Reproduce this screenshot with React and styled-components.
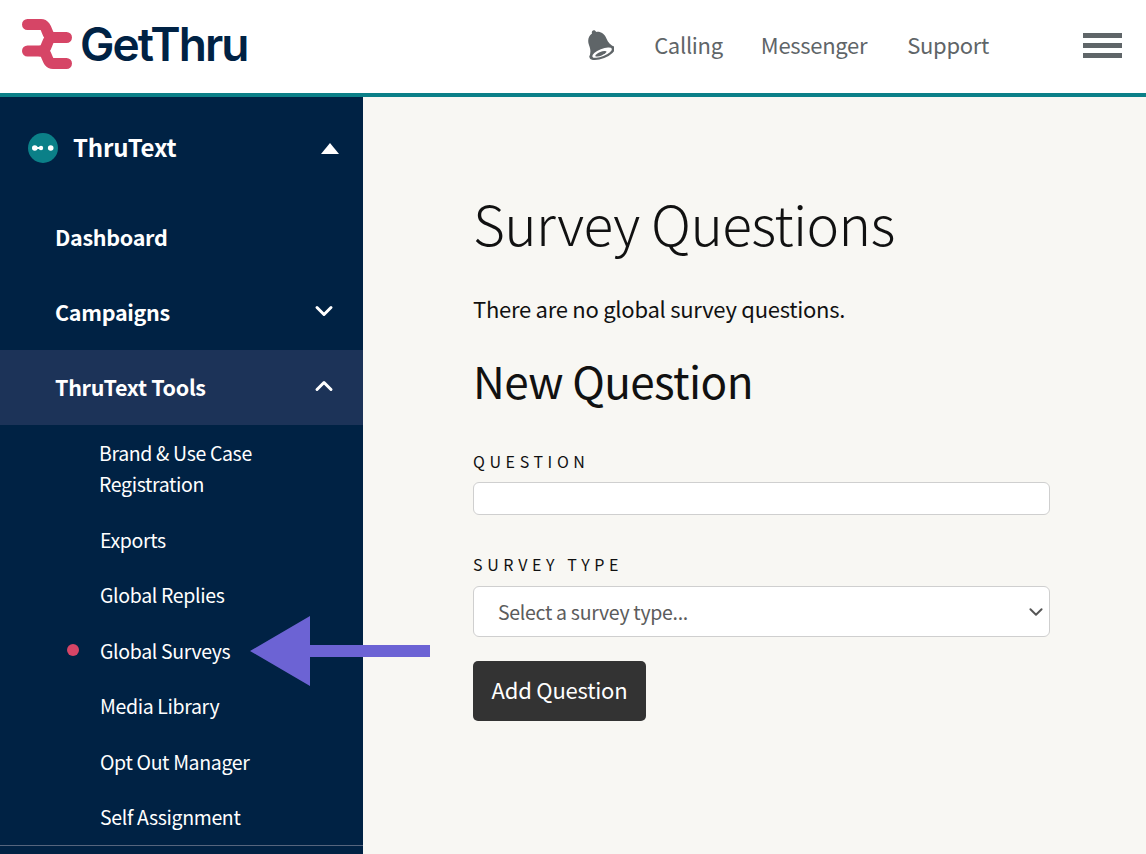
import React from "react";
import styled, { createGlobalStyle } from "styled-components";

const Global = createGlobalStyle`
  html, body { margin: 0; height: 100%; overflow: hidden; }
  body {
    background: #f8f7f3;
    font-family: "Noto Sans CJK JP", "Noto Sans", sans-serif;
    color: #111;
  }
`;

const Page = styled.div`
  position: relative;
  display: flex;
  flex-direction: column;
  width: 1146px;
  height: 854px;
  overflow: hidden;
`;

const Header = styled.header`
  display: flex;
  align-items: center;
  flex: 0 0 auto;
  height: 97px;
  padding: 0 24px 5px 22px;
  box-sizing: border-box;
  background: #fff;
  border-bottom: 4px solid #0b8088;
`;

const Brand = styled.div`
  display: flex;
  align-items: center;
  gap: 8px;
`;

const BrandName = styled.span`
  font-family: Inter, sans-serif;
  font-size: 46px;
  font-weight: 600;
  letter-spacing: -2px;
  color: #002244;
`;

const TopNav = styled.nav`
  display: flex;
  align-items: center;
  margin-left: auto;
`;

const NavLink = styled.a`
  font-size: 22px;
  letter-spacing: -0.3px;
  line-height: 30px;
  color: #5f6568;
  margin-left: ${(p) => p.$gap}px;
`;

const Burger = styled.div`
  display: flex;
  flex-direction: column;
  gap: 5px;
  width: 39px;
  margin: 3px 0 0 94px;
  span {
    display: block;
    height: 5px;
    background: #5f6568;
  }
`;

const Body = styled.div`
  display: flex;
  flex: 1;
  min-height: 0;
`;

const Sidebar = styled.aside`
  flex: 0 0 363px;
  background: #002244;
  color: #fff;
  padding-top: 14px;
  box-sizing: border-box;
`;

const ProductRow = styled.div`
  display: flex;
  align-items: center;
  height: 74px;
  margin-bottom: 15px;
  padding: 0 24px 0 28px;
  font-size: 24px;
  font-weight: 600;
  letter-spacing: -0.2px;
  gap: 15px;
`;

const ProductName = styled.span`
  margin-bottom: 4px;
`;

const ProductBadge = styled.span`
  display: flex;
  align-items: center;
  justify-content: center;
  width: 30px;
  height: 30px;
  border-radius: 50%;
  background: #0b8088;
`;

const Caret = styled.span`
  margin-left: auto;
  width: 0;
  height: 0;
  border-left: 9px solid transparent;
  border-right: 9px solid transparent;
  border-bottom: 11px solid #fff;
`;

const MainItem = styled.div`
  display: flex;
  align-items: center;
  justify-content: space-between;
  height: 75px;
  padding: 0 29px 3px 55px;
  box-sizing: border-box;
  font-size: 21.500px;
  letter-spacing: -0.3px;
  font-weight: 600;
  background: ${(p) => (p.$open ? "#1c3358" : "transparent")};
`;

const SubList = styled.ul`
  list-style: none;
  margin: 0;
  padding: 0 0 0.500px 100px;
`;

const SubItem = styled.li`
  position: relative;
  display: flex;
  align-items: center;
  height: ${(p) => (p.$tall ? 86.500 : 55.500)}px;
  font-size: 19.500px;
  letter-spacing: -0.35px;
  line-height: 31px;
  margin-left: ${(p) => (p.$tall ? -1 : 0)}px;
`;

const ActiveDot = styled.span`
  position: absolute;
  left: -33px;
  top: 21px;
  width: 12px;
  height: 12px;
  border-radius: 50%;
  background: #d64566;
`;

const SideDivider = styled.hr`
  margin: 0;
  border: 0;
  border-top: 1px solid #56657d;
`;

const Main = styled.main`
  flex: 1;
  padding: 87px 96px 0 110px;
  box-sizing: border-box;
`;

const Title = styled.h1`
  margin: 0;
  font-size: 55px;
  letter-spacing: -0.6px;
  line-height: 76px;
  font-weight: 300;
`;

const Note = styled.p`
  margin: 33px 0 0;
  font-size: 22px;
  letter-spacing: -0.26px;
  line-height: 30px;
`;

const SubTitle = styled.h2`
  margin: 27px 0 0;
  font-size: 44px;
  letter-spacing: -0.6px;
  line-height: 60px;
  font-weight: 400;
`;

const FieldLabel = styled.label`
  display: block;
  margin-top: ${(p) => p.$top}px;
  font-size: 16px;
  line-height: 22px;
  letter-spacing: 4.600px;
  text-transform: uppercase;
`;

const TextInput = styled.input`
  display: block;
  width: 100%;
  height: 33px;
  margin-top: 10px;
  padding: 0 12px;
  box-sizing: border-box;
  background: #fff;
  border: 1px solid #cfcfcf;
  border-radius: 6px;
`;

const SelectBox = styled.div`
  display: flex;
  align-items: center;
  justify-content: space-between;
  height: 51px;
  margin-top: 11px;
  padding: 0 5px 0 24px;
  box-sizing: border-box;
  background: #fff;
  border: 1px solid #cfcfcf;
  border-radius: 6px;
  font-size: 19.500px;
  letter-spacing: -0.3px;
  color: #5c5c5c;
`;

const AddButton = styled.button`
  display: block;
  width: 173px;
  height: 60px;
  margin-top: 24px;
  padding: 0 0 4px;
  border: 0;
  border-radius: 5px;
  background: #333;
  color: #fff;
  font-family: inherit;
  font-size: 22px;
  letter-spacing: -0.2px;
`;

const Arrow = styled.svg`
  position: absolute;
  left: 250px;
  top: 616px;
`;

const ChevronDown = ({ size = 20, stroke = 3, color = "#fff" }) => (
  <svg width={size} height={size} viewBox="0 0 20 20" fill="none">
    <path d="M3 6.500 10 13.500 17 6.500" stroke={color} strokeWidth={stroke} strokeLinecap="round" strokeLinejoin="round" />
  </svg>
);

const ChevronUp = () => (
  <svg width="20" height="20" viewBox="0 0 20 20" fill="none">
    <path d="M3 13.500 10 6.500 17 13.500" stroke="#fff" strokeWidth="3" strokeLinecap="round" strokeLinejoin="round" />
  </svg>
);

const Logo = () => (
  <svg width="50" height="50" viewBox="0 0 50 50" fill="none" stroke="#d64566" strokeWidth="11" strokeLinecap="round">
    <path d="M5.500 5.500H19C26 5.500 24 18.500 31 18.500H44.500" />
    <path d="M31 18.500C24 18.500 26 32 19 32H5.500" />
    <path d="M19 32C26 32 24 44.500 31 44.500H44.500" />
  </svg>
);

const Bell = () => (
  <svg width="30" height="33" viewBox="0 0 30 33">
    <g transform="rotate(-22 15 17)">
      <path fill="#5f6568" d="M12.800 3.800C12.800 2.300 13.800 1.300 15 1.300S17.200 2.300 17.200 3.800C21.800 5 24.300 8.800 24.300 13.500 24.300 18.500 25.800 21.500 28.500 24.500H1.500C4.200 21.500 5.700 18.500 5.700 13.500 5.700 8.800 8.200 5 12.800 3.800Z" />
      <ellipse cx="15" cy="25.500" rx="13.500" ry="5.500" fill="#5f6568" />
      <ellipse cx="15" cy="25.300" rx="10.500" ry="3.600" fill="#fff" />
      <ellipse cx="13.500" cy="25.800" rx="6" ry="1.800" fill="#5f6568" />
    </g>
  </svg>
);

const ThruIcon = () => (
  <svg width="22" height="8" viewBox="0 0 22 8">
    <circle cx="2.800" cy="4" r="2.800" fill="#fff" />
    <rect x="3" y="3" width="6" height="2" fill="#fff" />
    <circle cx="9" cy="4" r="2.200" fill="#fff" />
    <circle cx="18.700" cy="4" r="2.800" fill="#fff" />
  </svg>
);

const subItems = ["Exports", "Global Replies", "Global Surveys", "Media Library", "Opt Out Manager", "Self Assignment"];

export default function App() {
  return (
    <Page>
      <Global />
      <Header>
        <Brand>
          <Logo />
          <BrandName>GetThru</BrandName>
        </Brand>
        <TopNav>
          <Bell />
          <NavLink $gap={40}>Calling</NavLink>
          <NavLink $gap={38}>Messenger</NavLink>
          <NavLink $gap={40}>Support</NavLink>
          <Burger>
            <span />
            <span />
            <span />
          </Burger>
        </TopNav>
      </Header>
      <Body>
        <Sidebar>
          <ProductRow>
            <ProductBadge>
              <ThruIcon />
            </ProductBadge>
            <ProductName>ThruText</ProductName>
            <Caret />
          </ProductRow>
          <MainItem>Dashboard</MainItem>
          <MainItem>
            Campaigns
            <ChevronDown />
          </MainItem>
          <MainItem $open>
            ThruText Tools
            <ChevronUp />
          </MainItem>
          <SubList>
            <SubItem $tall>
              Brand &amp; Use Case
              <br />
              Registration
            </SubItem>
            {subItems.map((item) => (
              <SubItem key={item}>
                {item === "Global Surveys" && <ActiveDot />}
                {item}
              </SubItem>
            ))}
          </SubList>
          <SideDivider />
        </Sidebar>
        <Main>
          <Title>Survey Questions</Title>
          <Note>There are no global survey questions.</Note>
          <SubTitle>New Question</SubTitle>
          <FieldLabel $top={40}>Question</FieldLabel>
          <TextInput />
          <FieldLabel $top={38}>Survey Type</FieldLabel>
          <SelectBox>
            Select a survey type...
            <ChevronDown size={16} stroke={2.400} color="#555" />
          </SelectBox>
          <AddButton>Add Question</AddButton>
        </Main>
      </Body>
      <Arrow width="180" height="70" viewBox="0 0 180 70">
        <path fill="#6c63d4" d="M0 35 60 0V29H180V41H60V70Z" />
      </Arrow>
    </Page>
  );
}
